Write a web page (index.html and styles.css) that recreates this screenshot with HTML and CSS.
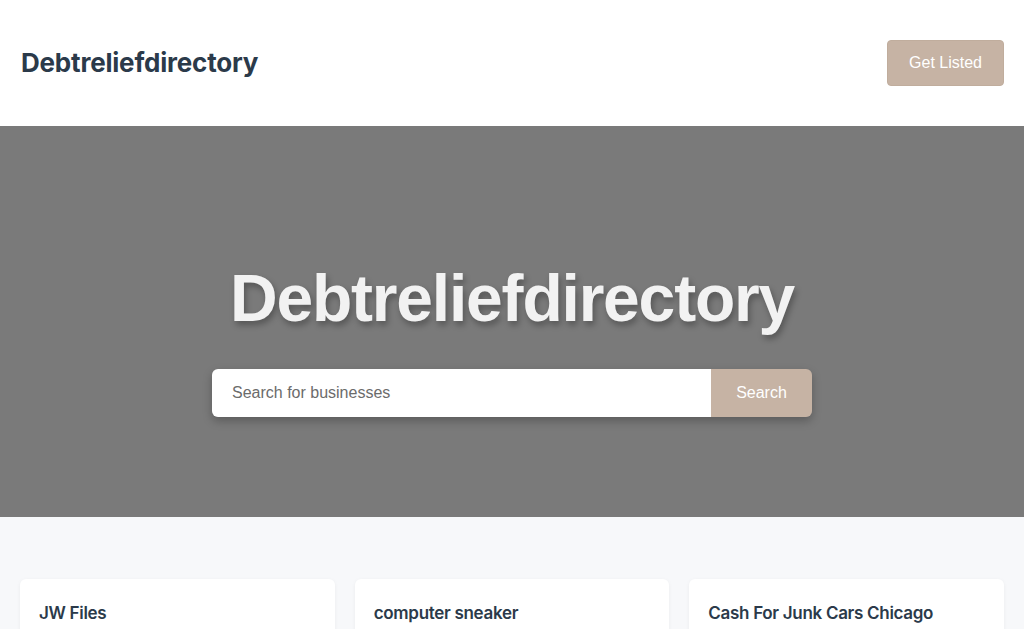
FILE: index.html
```html
<!DOCTYPE html>
<html lang="en">
<head>
    <meta charset="UTF-8">
    <meta name="viewport" content="width=device-width, initial-scale=1.0">
    <title>Debtreliefdirectory</title>
    <link rel="stylesheet" href="styles.css">
</head>
<body>
    <header class="site-header">
        <a class="logo" href="#">Debtreliefdirectory</a>
        <a class="get-listed" href="#">Get Listed</a>
    </header>

    <section class="hero">
        <h1>Debtreliefdirectory</h1>
        <form class="search-form">
            <input type="text" class="search-input" placeholder="Search for businesses">
            <button type="submit" class="search-button">Search</button>
        </form>
    </section>

    <main class="listings">
        <div class="card"><h3>JW Files</h3></div>
        <div class="card"><h3>computer sneaker</h3></div>
        <div class="card"><h3>Cash For Junk Cars Chicago</h3></div>
    </main>
</body>
</html>
```

FILE: styles.css
```css
body {
    margin: 0;
    font-family: "Liberation Sans", Arial, sans-serif;
    background-color: #f7f8fa;
}

.site-header {
    background: #fff;
    height: 126px;
    padding: 0 20px 0 21px;
    display: flex;
    align-items: center;
    justify-content: space-between;
    box-sizing: border-box;
}

.logo {
    font-family: Inter, sans-serif;
    font-size: 26px;
    font-weight: 700;
    color: #2b3a4a;
    text-decoration: none;
    letter-spacing: -0.2px;
    margin-top: -2px;
}

.get-listed {
    display: inline-block;
    background-color: #c6b3a4;
    color: #fff;
    text-decoration: none;
    font-size: 16px;
    padding: 13px 21px;
    border-radius: 4px;
    border: 1px solid #c0ad9d;
}

.hero {
    background-color: #7a7a7a;
    height: 391px;
    display: flex;
    flex-direction: column;
    align-items: center;
    justify-content: center;
    padding-top: 34px;
    box-sizing: border-box;
}

.hero h1 {
    margin: 0 0 33px;
    font-size: 66px;
    font-weight: 700;
    color: #f2f2f2;
    letter-spacing: -1.2px;
    text-shadow: 2px 4px 6px rgba(0, 0, 0, 0.3);
}

.search-form {
    display: flex;
    width: 600px;
    height: 48px;
    border-radius: 6px;
    overflow: hidden;
    box-shadow: 0 4px 10px rgba(0, 0, 0, 0.25);
}

.search-input {
    flex: 1;
    border: none;
    padding: 0 20px;
    font-family: "Liberation Sans", Arial, sans-serif;
    font-size: 16px;
    color: #333;
    outline: none;
}

.search-input::placeholder {
    color: #6b6b6b;
}

.search-button {
    width: 101px;
    border: none;
    background-color: #c6b3a4;
    color: #fff;
    font-family: "Liberation Sans", Arial, sans-serif;
    font-size: 16px;
    cursor: pointer;
}

.listings {
    display: grid;
    grid-template-columns: repeat(3, 1fr);
    gap: 20px;
    padding: 62px 20px 0;
}

.card {
    background: #fff;
    border-radius: 6px;
    box-shadow: 0 1px 4px rgba(0, 0, 0, 0.05);
    padding: 24px 19px;
    height: 120px;
}

.card h3 {
    margin: 0;
    font-family: Inter, sans-serif;
    font-size: 17px;
    font-weight: 600;
    color: #2b3a4a;
    letter-spacing: -0.3px;
}
```
